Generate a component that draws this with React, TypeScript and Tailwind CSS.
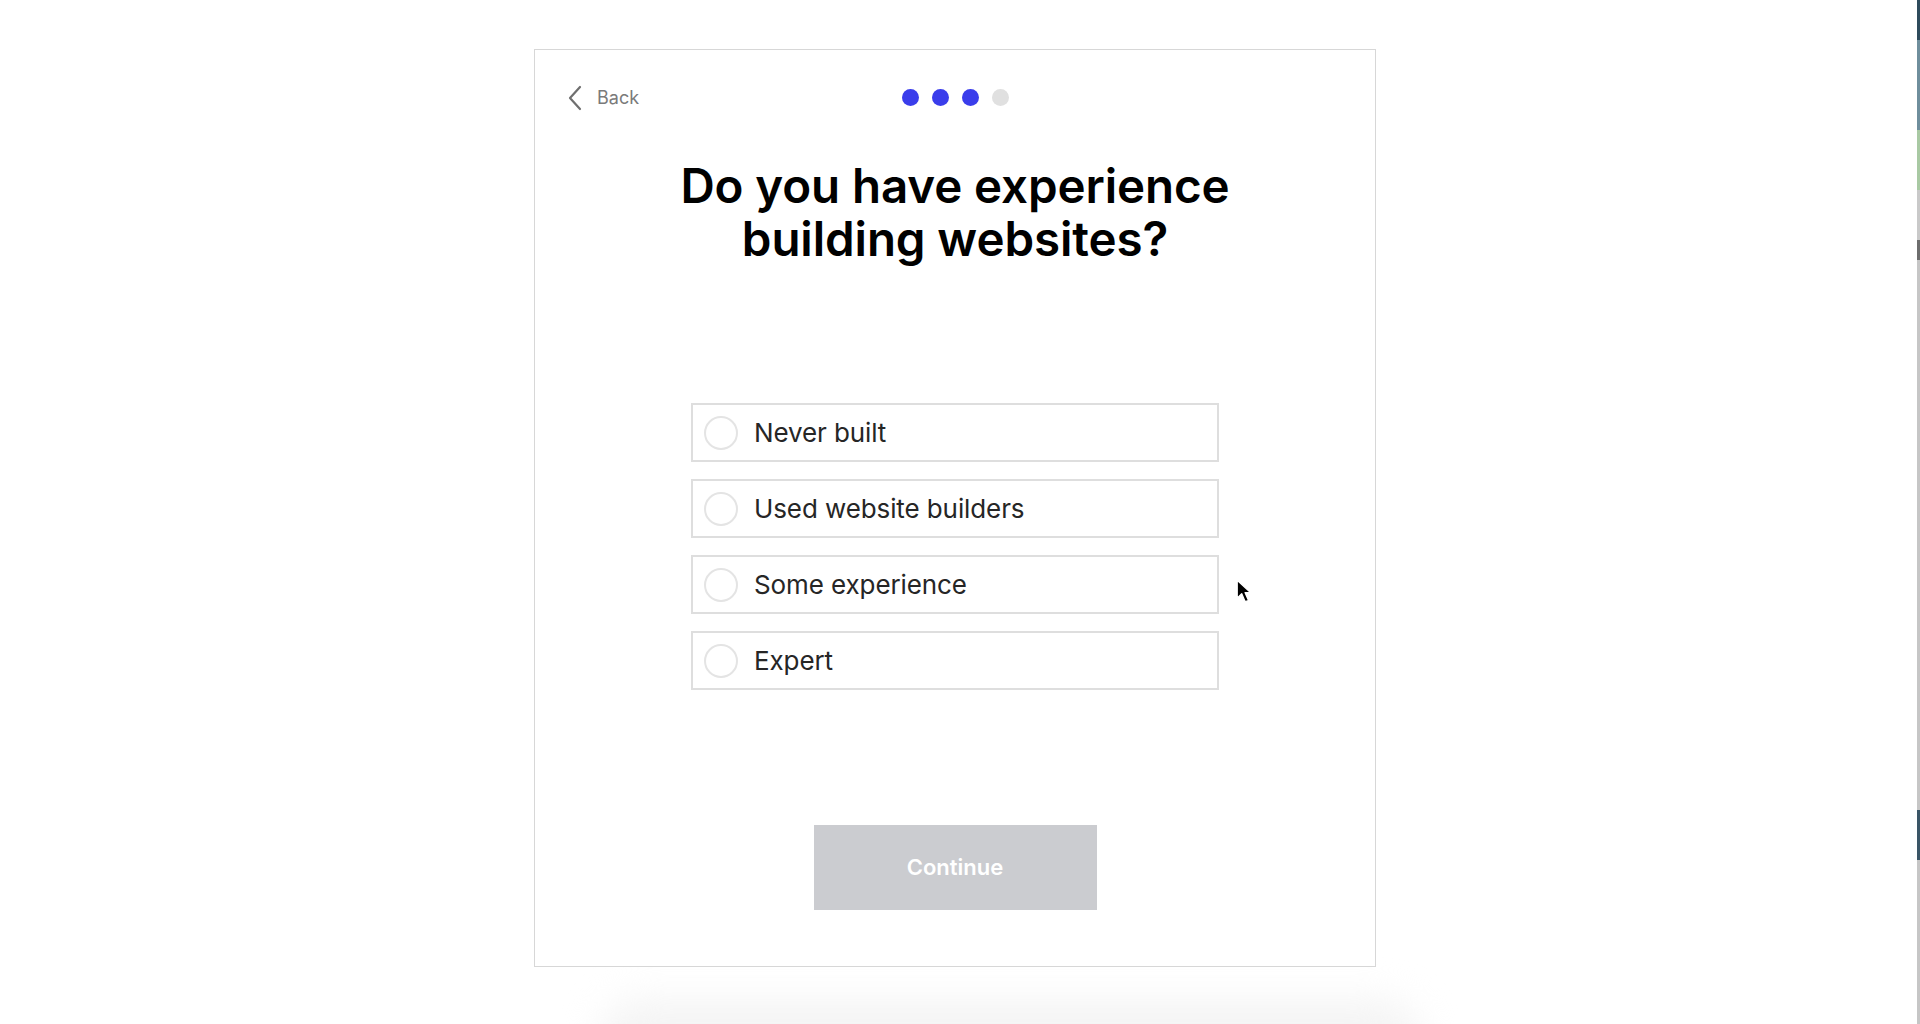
import React, { useState } from 'react';

const options = ['Never built', 'Used website builders', 'Some experience', 'Expert'];

const steps = [true, true, true, false];

export default function App() {
  const [selected, setSelected] = useState<number | null>(null);

  return (
    <div className="relative w-[1920px] h-[1024px] overflow-hidden bg-white font-['Inter',sans-serif]">
      {/* soft shadow of the next panel peeking under the card */}
      <div className="absolute left-[600px] top-[1000px] w-[820px] h-[80px] rounded-[40px] bg-[#f4f4f4] blur-[18px]"></div>

      {/* sliver of another window at the right edge */}
      <div className="absolute right-0 top-0 w-[3px] h-[1024px] flex flex-col">
        <div className="h-[40px] bg-[#2f4b5c]"></div>
        <div className="h-[90px] bg-[#6f8e9c]"></div>
        <div className="h-[60px] bg-[#a9c9a3]"></div>
        <div className="h-[50px] bg-[#c9c9c9]"></div>
        <div className="h-[20px] bg-[#6d6d6d]"></div>
        <div className="h-[550px] bg-[#c6c6c6]"></div>
        <div className="h-[50px] bg-[#3a5566]"></div>
        <div className="flex-1 bg-[#c6c6c6]"></div>
      </div>

      <div className="relative ml-[534px] pt-[49px]">
        <div className="w-[842px] h-[918px] border border-[#d7d7d7] bg-white flex flex-col items-center">
          {/* Header */}
          <div className="relative w-full h-[94px] flex items-center justify-center">
            <button className="absolute left-[32px] top-[35px] flex items-center gap-[14px] text-[#7a7a7a]">
              <svg width="16" height="26" viewBox="0 0 16 26" fill="none">
                <path d="M13 2L3 13l10 11" stroke="#6f6f6f" strokeWidth="2.2" strokeLinecap="round" strokeLinejoin="round" />
              </svg>
              <span className="text-[18px] leading-none">Back</span>
            </button>
            <div className="flex gap-[13px]">
              {steps.map((done, i) => (
                <span
                  key={i}
                  className={`w-[17px] h-[17px] rounded-full ${done ? 'bg-[#3a3deb]' : 'bg-[#e0e0e0]'}`}
                ></span>
              ))}
            </div>
          </div>

          {/* Title */}
          <h1 className="mt-[15px] text-center text-[47.5px] leading-[53px] font-semibold text-black tracking-[-0.1px]">
            Do you have experience
            <br />
            building websites?
          </h1>

          {/* Options */}
          <div className="mt-[138px] flex flex-col gap-[17px]">
            {options.map((label, i) => (
              <button
                key={label}
                onClick={() => setSelected(i)}
                className="w-[528px] h-[59px] border-2 border-[#dedede] flex items-center pl-[11px] text-left"
              >
                <span
                  className={`w-[34px] h-[34px] rounded-full border-2 ${selected === i ? 'border-[#3a3deb]' : 'border-[#e4e4e4]'}`}
                ></span>
                <span className="ml-[16px] text-[26px] tracking-[-0.1px] text-[#262626]">{label}</span>
              </button>
            ))}
          </div>

          {/* Continue */}
          <button className="mt-[135px] w-[283px] h-[85px] bg-[#cbccd0] text-white text-[22px] font-semibold">
            Continue
          </button>
        </div>
      </div>

      {/* mouse pointer */}
      <svg className="absolute left-[1236px] top-[579px]" width="16" height="25" viewBox="0 0 14 22">
        <path d="M1 1v16l4-4 3 7 3-1-3-7h5z" fill="#000" stroke="#fff" strokeWidth="1.2" strokeLinejoin="round" />
      </svg>
    </div>
  );
}
